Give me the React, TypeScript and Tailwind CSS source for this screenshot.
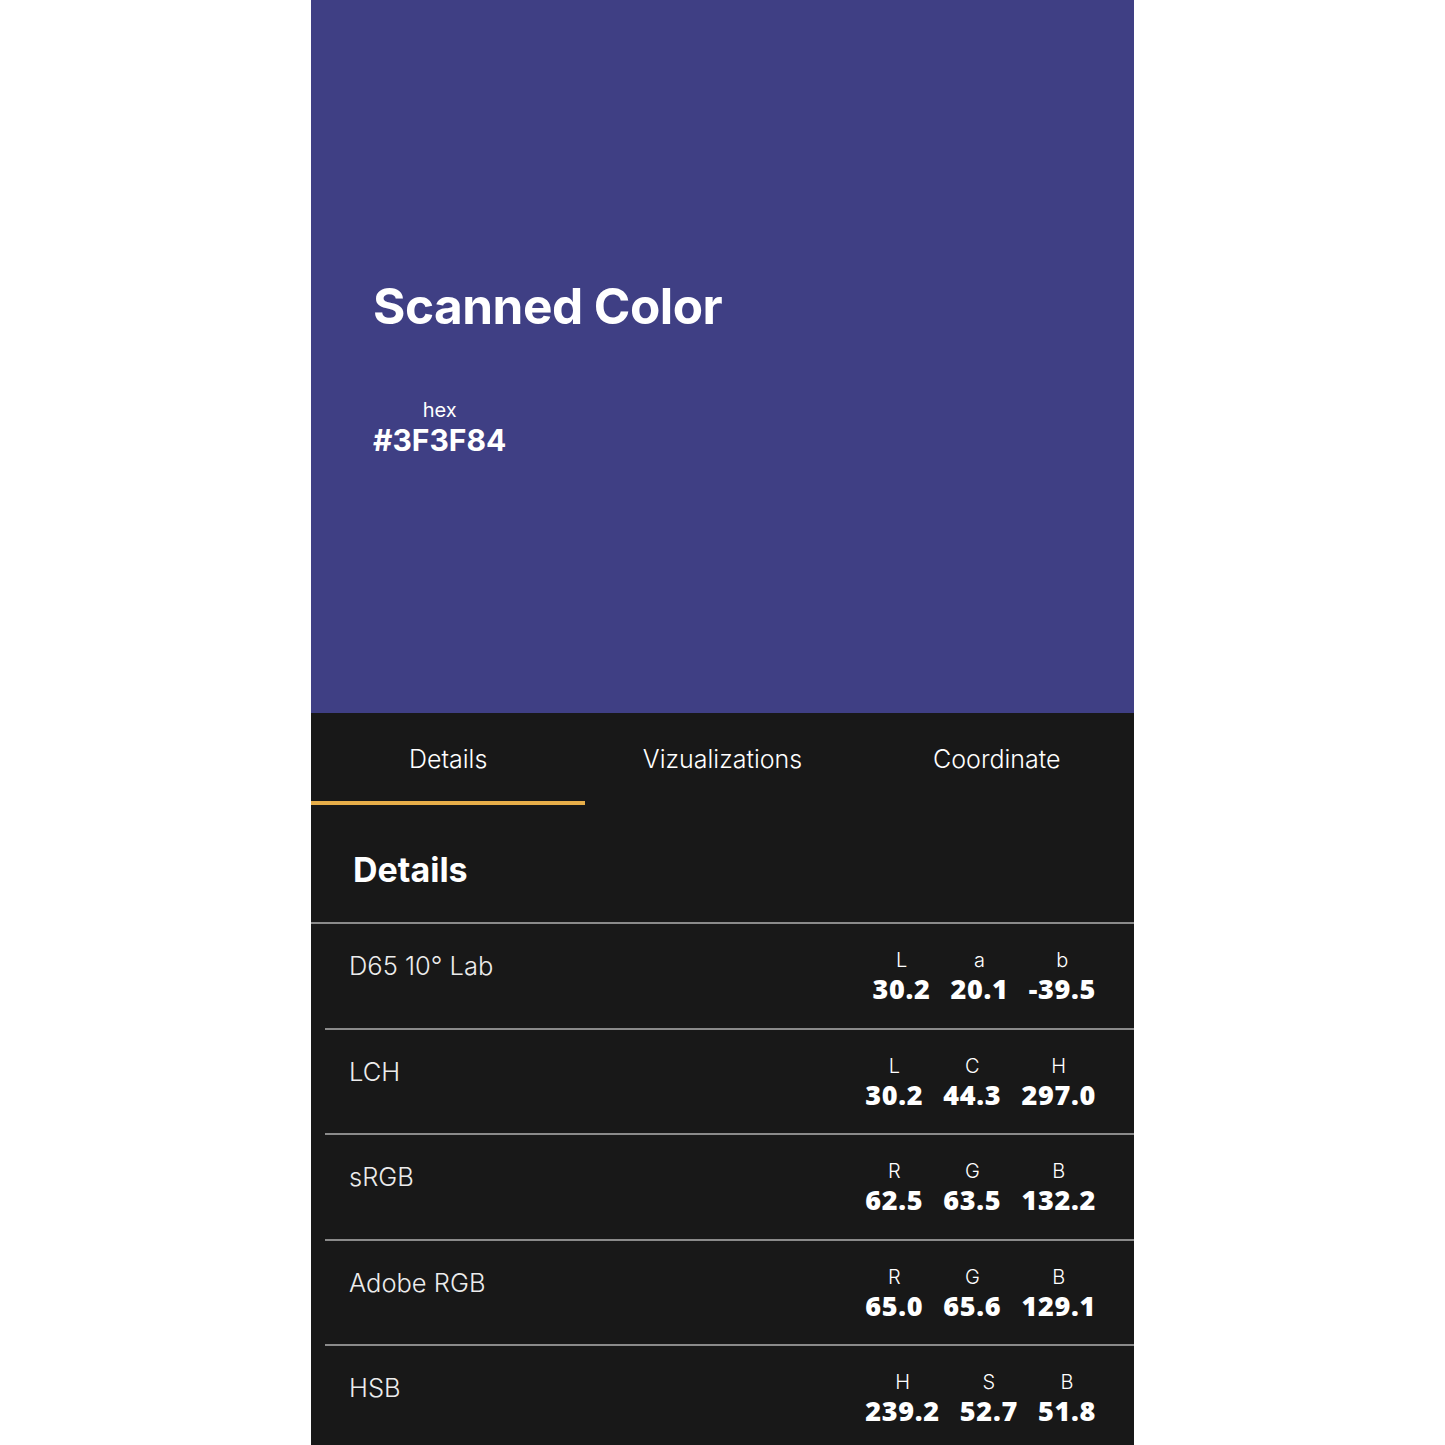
import React from "react";

type Row = { name: string; cols: { k: string; v: string }[] };

const rows: Row[] = [
  { name: "D65 10° Lab", cols: [ { k: "L", v: "30.2" }, { k: "a", v: "20.1" }, { k: "b", v: "-39.5" } ] },
  { name: "LCH", cols: [ { k: "L", v: "30.2" }, { k: "C", v: "44.3" }, { k: "H", v: "297.0" } ] },
  { name: "sRGB", cols: [ { k: "R", v: "62.5" }, { k: "G", v: "63.5" }, { k: "B", v: "132.2" } ] },
  { name: "Adobe RGB", cols: [ { k: "R", v: "65.0" }, { k: "G", v: "65.6" }, { k: "B", v: "129.1" } ] },
  { name: "HSB", cols: [ { k: "H", v: "239.2" }, { k: "S", v: "52.7" }, { k: "B", v: "51.8" } ] },
];

export default function App() {
  return (
    <div className="min-h-screen w-full bg-white flex justify-center" style={{ fontFamily: "Inter, 'Noto Sans', sans-serif" }}>
      <div className="w-[823px] h-[1445px] overflow-hidden bg-[#181818] flex flex-col">
        <div className="h-[713px] shrink-0 bg-[#3F3F84] pl-[62px] pt-[276px] flex flex-col text-white">
          <h1 className="text-[49.5px] leading-[60px] font-bold tracking-[-0.5px]">Scanned Color</h1>
          <div className="mt-[62px] flex flex-col items-center self-start">
            <span className="text-[20px] leading-[24px] font-normal">hex</span>
            <span className="text-[30px] leading-[36px] font-bold">#3F3F84</span>
          </div>
        </div>
        <div className="h-[92px] shrink-0 grid grid-cols-3 text-white text-[25px] font-light">
          <div className="flex items-center justify-center border-b-4 border-[#E7AE49] pt-[6px]">Details</div>
          <div className="flex items-center justify-center pt-[2px]">Vizualizations</div>
          <div className="flex items-center justify-center pt-[2px]">Coordinate</div>
        </div>
        <div className="h-[117px] shrink-0 flex items-center pl-[42px] pt-[12px]">
          <h2 className="text-white text-[34px] font-bold">Details</h2>
        </div>
        <div className="h-[2px] shrink-0 bg-[#8a8a8a]" />
        {rows.map((r, i) => (
          <div key={i} className="flex flex-col shrink-0">
            <div className="h-[103.5px] flex justify-between pl-[38px] pr-[38px] pt-[27px]">
              <span className="text-[#ececec] text-[25.5px] leading-[30px] font-light">{r.name}</span>
              <div className="flex gap-[20px] -mt-[3px]">
                {r.cols.map((c, j) => (
                  <div key={j} className="flex flex-col items-center">
                    <span className="text-white text-[20px] leading-[24px] font-light">{c.k}</span>
                    <span className="text-white text-[27px] leading-[33px] font-extrabold tracking-[0.7px]" style={{ fontFamily: "'Open Sans', sans-serif" }}>{c.v}</span>
                  </div>
                ))}
              </div>
            </div>
            <div className="h-[2px] bg-[#8a8a8a] ml-[14px]" />
          </div>
        ))}
      </div>
    </div>
  );
}
